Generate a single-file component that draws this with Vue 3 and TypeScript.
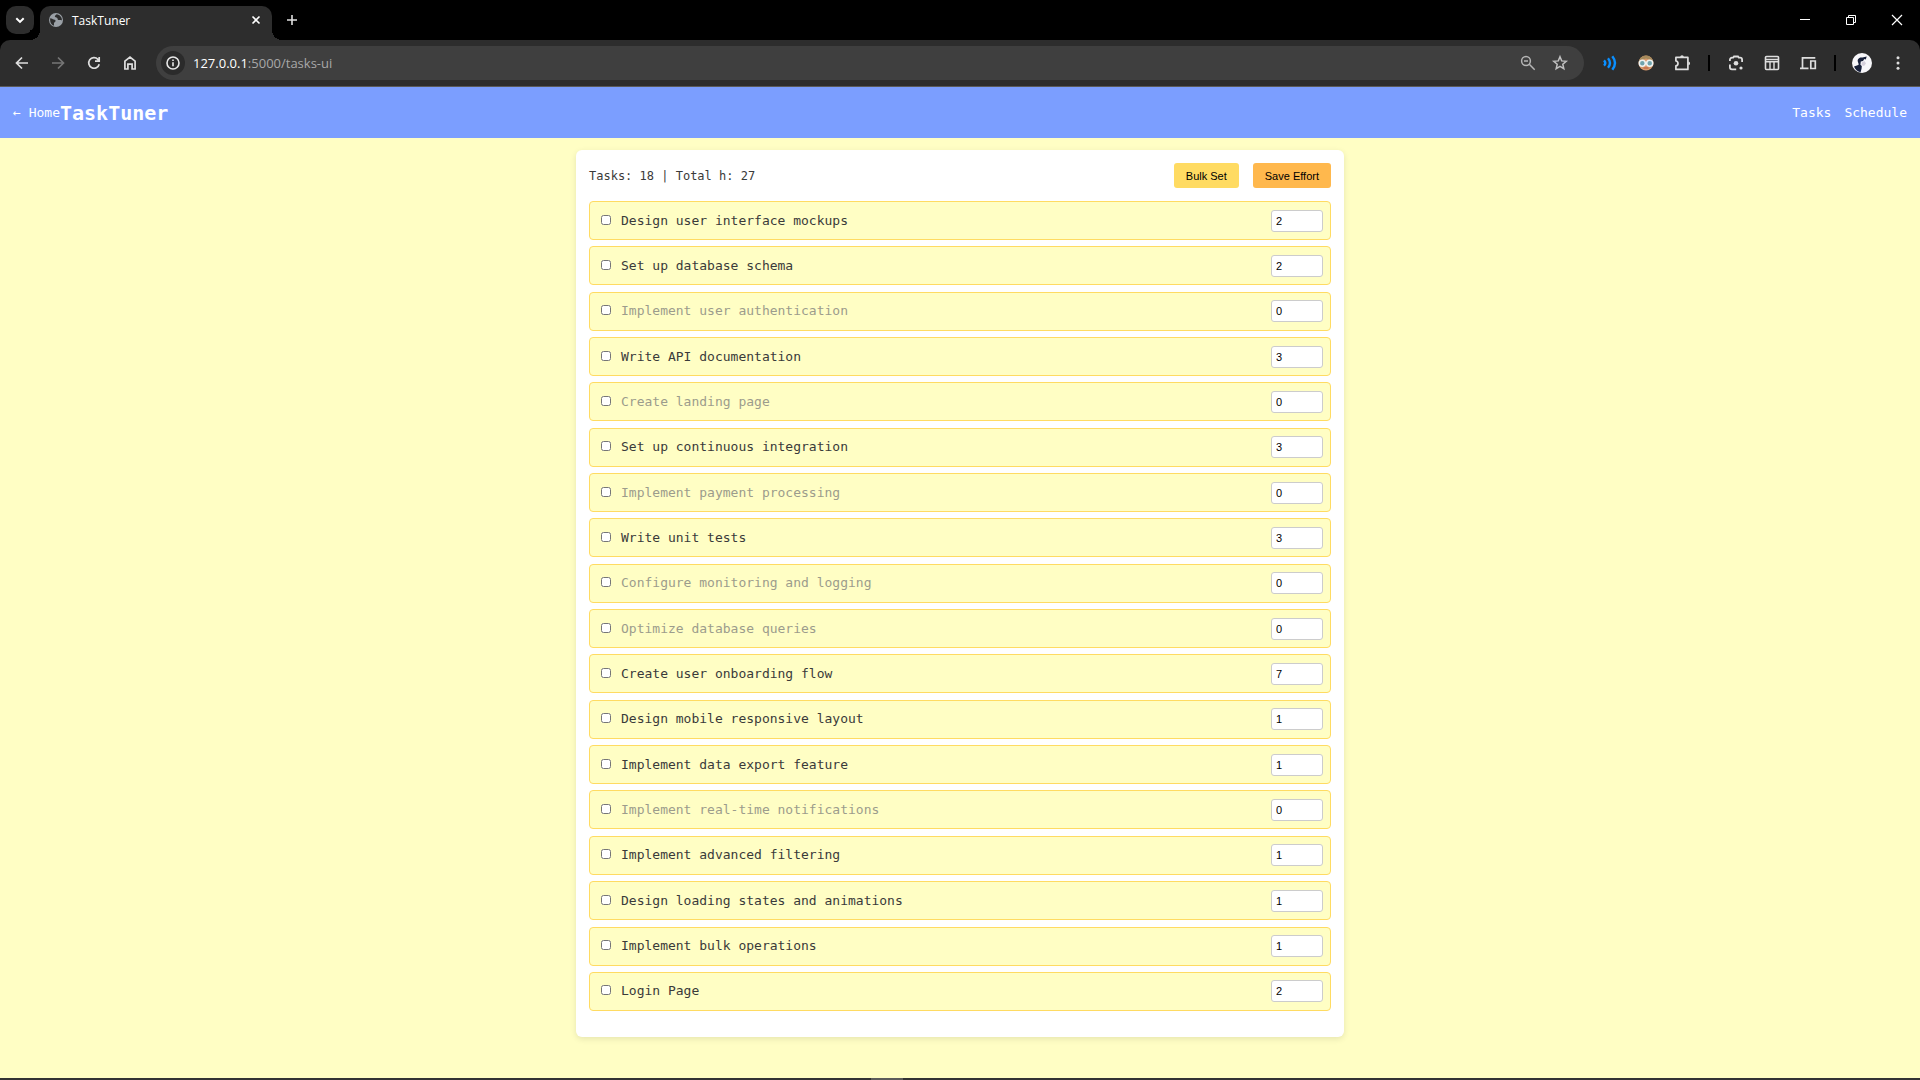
<script setup lang="ts">
import { computed, reactive } from 'vue'

interface Task {
  name: string
  hours: number
  selected: boolean
}

const rows: [string, number][] = [
  ['Design user interface mockups', 2],
  ['Set up database schema', 2],
  ['Implement user authentication', 0],
  ['Write API documentation', 3],
  ['Create landing page', 0],
  ['Set up continuous integration', 3],
  ['Implement payment processing', 0],
  ['Write unit tests', 3],
  ['Configure monitoring and logging', 0],
  ['Optimize database queries', 0],
  ['Create user onboarding flow', 7],
  ['Design mobile responsive layout', 1],
  ['Implement data export feature', 1],
  ['Implement real-time notifications', 0],
  ['Implement advanced filtering', 1],
  ['Design loading states and animations', 1],
  ['Implement bulk operations', 1],
  ['Login Page', 2],
]

const tasks = reactive<Task[]>(rows.map(([name, hours]) => ({ name, hours, selected: false })))
const total = computed(() => tasks.reduce((sum, t) => sum + (Number(t.hours) || 0), 0))
</script>

<template>
  <div class="window">
    <div class="chrome">
      <div class="tabstrip">
        <button class="tab-search" aria-label="Search tabs">
          <svg width="28" height="28" viewBox="0 0 28 28" fill="none" stroke="#fff" stroke-width="2"><path d="M10.300 12.200 14 15.900l3.700-3.700" /></svg>
        </button>
        <div class="tab">
          <svg class="favicon" width="16" height="16" viewBox="0 0 16 16">
            <circle cx="8" cy="8" r="7" fill="#9aa0a6" />
            <path d="M2.200 6.200c1.600.200 2.400 1 3.600 1.200 1.300.200 2 .700 1.700 1.900-.200.900-1.300.900-1.500 1.700-.200.900.300 1.500-.200 2.700C3.500 12.900 1.700 10.300 2.200 6.200zM8.600 2.200c-.500 1-1.700 1-1.800 2-.100 1.100 1.500.900 2.200 1.500.900.700.200 1.700 1.300 2.200 1.300.500 2.300-.300 3.600.700.300-3.200-2-6-5.300-6.400z" fill="#2d2d2d" />
          </svg>
          <span class="tab-title">TaskTuner</span>
          <button class="tab-close" aria-label="Close tab">
            <svg width="16" height="16" viewBox="0 0 16 16" stroke="#fff" stroke-width="1.600"><path d="m4.500 4.500 7 7m0-7-7 7" /></svg>
          </button>
        </div>
        <button class="new-tab" aria-label="New tab">
          <svg width="16" height="16" viewBox="0 0 16 16" stroke="#e0e0e0" stroke-width="1.600"><path d="M8 3v10M3 8h10" /></svg>
        </button>
        <div class="window-controls">
          <button aria-label="Minimize"><svg width="12" height="12" viewBox="0 0 12 12"><path d="M1 5h10v1H1z" fill="#fff" /></svg></button>
          <button aria-label="Restore"><svg width="12" height="12" viewBox="0 0 12 12" fill="none" stroke="#fff"><path d="M1.500 3.500h7v7h-7zM3.500 3.500v-2h7v7h-2" /></svg></button>
          <button aria-label="Close"><svg width="12" height="12" viewBox="0 0 12 12" stroke="#fff" stroke-width="1.200"><path d="m1 1 10 10M11 1 1 11" /></svg></button>
        </div>
      </div>

      <div class="toolbar">
        <button class="tool" aria-label="Back"><svg width="20" height="20" viewBox="0 0 20 20" fill="none" stroke="#dedede" stroke-width="1.700"><path d="M16 10H5M10 4.500 4.500 10l5.500 5.500" /></svg></button>
        <button class="tool" aria-label="Forward"><svg width="20" height="20" viewBox="0 0 20 20" fill="none" stroke="#757575" stroke-width="1.700"><path d="M4 10h11M10 4.500l5.500 5.500-5.500 5.500" /></svg></button>
        <button class="tool" aria-label="Reload"><svg width="20" height="20" viewBox="0 0 20 20" fill="none" stroke="#dedede" stroke-width="1.700"><path d="M15.200 11.200A5.300 5.300 0 1 1 13.900 6.300L15 7.500M15.200 4v4.200H11" /></svg></button>
        <button class="tool" aria-label="Home"><svg width="20" height="20" viewBox="0 0 20 20" fill="none" stroke="#dedede" stroke-width="1.700"><path d="M4.900 8.200 10 4l5.100 4.200V16h-3v-4.800H7.900V16h-3z" /></svg></button>

        <div class="omnibox">
          <button class="site-info" aria-label="Site information"><svg width="16" height="16" viewBox="0 0 16 16" fill="none" stroke="#e8e8e8" stroke-width="1.600"><circle cx="8" cy="8" r="6" /><path d="M8 7.200v4M8 4.500v1.600" /></svg></button>
          <span class="url">127.0.0.1<span class="path">:5000/tasks-ui</span></span>
          <button class="omni-btn" aria-label="Zoom"><svg width="18" height="18" viewBox="0 0 18 18" fill="none" stroke="#b5b5b5" stroke-width="1.500"><circle cx="7" cy="7" r="4.400" /><path d="m10.300 10.300 5.400 5.400M5 7h4" /></svg></button>
          <button class="omni-btn" aria-label="Bookmark"><svg width="18" height="18" viewBox="0 0 18 18" fill="none" stroke="#c0c0c0" stroke-width="1.500"><path d="m9 2.800 1.700 4.100 4.500.400-3.400 2.900 1 4.400L9 12.300l-3.800 2.300 1-4.400-3.400-2.900 4.500-.400z" /></svg></button>
        </div>

        <button class="tool" aria-label="Read aloud"><svg width="18" height="18" viewBox="0 0 18 18" fill="none" stroke="#0a8fff" stroke-width="2.400"><path d="M3 6.300q2.600 2.700 0 5.400M7 4.200q4 4.800 0 9.600M11.300 2.300q5.400 6.700 0 13.400" /></svg></button>
        <button class="tool" aria-label="Extension">
          <svg width="18" height="18" viewBox="0 0 18 18">
            <circle cx="9" cy="9" r="7.500" fill="#d99a6c" />
            <path d="M1.500 9a7.500 7.500 0 0 1 15 0L14 6 9 4.500 4 6z" fill="#a58a5c" />
            <circle cx="5.300" cy="9.300" r="3" fill="#6fa3ad" stroke="#eef2f2" stroke-width="1.500" />
            <circle cx="12.700" cy="9.300" r="3" fill="#6fa3ad" stroke="#eef2f2" stroke-width="1.500" />
            <path d="M6.500 14h5" stroke="#b5543f" />
          </svg>
        </button>
        <button class="tool" aria-label="Extensions"><svg width="20" height="20" viewBox="0 0 20 20" fill="none" stroke="#dedede" stroke-width="1.700"><path d="M3.900 4.400h12v12h-12v-3.600c2.800-.400 2.800-4.400 0-4.800z" stroke-linejoin="round" /><path d="M8.200 4a1.800 1.800 0 0 1 3.600 0zM16.300 8.600a1.800 1.800 0 0 1 0 3.600z" fill="#dedede" stroke="none" /></svg></button>
        <span class="divider"></span>
        <button class="tool" aria-label="Search with Lens"><svg width="18" height="18" viewBox="0 0 18 18" fill="none" stroke="#dedede" stroke-width="1.800"><path d="M2.900 7V5.700a2 2 0 0 1 2-2h1.300l.8-1.200h4l.8 1.200h1.300a2 2 0 0 1 2 2V8M2.900 10.500v2.800a2 2 0 0 0 2 2h4.300" /><circle cx="9" cy="9.200" r="2.300" fill="#dedede" stroke="none" /><circle cx="14" cy="14" r="1.600" fill="#dedede" stroke="none" /></svg></button>
        <button class="tool" aria-label="Reading list"><svg width="18" height="18" viewBox="0 0 18 18" fill="none" stroke="#dedede" stroke-width="1.600"><rect x="2.500" y="2.500" width="13" height="13" rx="1" /><path d="M3 5.500h12M3 7.800h12M7 8v7M11 8v7" stroke-width="1.400" /></svg></button>
        <button class="tool" aria-label="Send to devices"><svg width="18" height="18" viewBox="0 0 18 18" fill="none" stroke="#dedede" stroke-width="1.700"><path d="M1 14.300h8.500M3.500 14V3.900h12.800M11.800 7h4.500v7.500h-4.500z" /></svg></button>
        <span class="divider"></span>
        <button class="tool" aria-label="Profile">
          <svg width="20" height="20" viewBox="0 0 20 20">
            <circle cx="10" cy="10" r="10" fill="#f7f7fa" />
            <path d="M5.800 8.500C5.200 6 7.500 4 10.500 4.600l4.200-1.200-.9 3-1.500-.4-1.300 2-2.200.5-.4 3.200 1.400 1.300-.2 2.500-1 3.700C5.500 18.500 3 16.500 2 13.500l3.600-1.200 1.200-.8z" fill="#17203a" />
            <path d="m12.500 8 1.500 2.500-2 2.500-2.500-1 .3-2.500z" fill="#d5d0dc" />
          </svg>
        </button>
        <button class="tool" aria-label="Menu"><svg width="18" height="18" viewBox="0 0 18 18" fill="#dedede"><circle cx="9" cy="3.700" r="1.500" /><circle cx="9" cy="9" r="1.500" /><circle cx="9" cy="14.300" r="1.500" /></svg></button>
      </div>
    </div>

    <header class="app-header">
      <a class="nav-link" href="#home">← Home</a>
      <h1>TaskTuner</h1>
      <nav>
        <a class="nav-link" href="#tasks">Tasks</a>
        <a class="nav-link" href="#schedule">Schedule</a>
      </nav>
    </header>

    <main>
      <section class="card">
        <div class="card-head">
          <span class="summary">Tasks: {{ tasks.length }} | Total h: {{ total }}</span>
          <div class="actions">
            <button class="action bulk">Bulk Set</button>
            <button class="action save">Save Effort</button>
          </div>
        </div>
        <ul class="tasks">
          <li v-for="(task, i) in tasks" :key="task.name" class="task">
            <input :id="`task-${i}`" v-model="task.selected" type="checkbox" />
            <label :for="`task-${i}`" :class="{ muted: task.hours === 0 }">{{ task.name }}</label>
            <input v-model="task.hours" class="effort" type="number" min="0" :aria-label="`Hours for ${task.name}`" />
          </li>
        </ul>
      </section>
    </main>
    <div class="taskbar-edge"><span></span></div>
  </div>
</template>

<style>
body {
  margin: 0;
  background: #fffec4;
}
</style>

<style scoped>
* {
  box-sizing: border-box;
}
.window {
  display: flex;
  flex-direction: column;
  min-height: 100vh;
  font-family: 'DejaVu Sans Mono', monospace;
  color: #3a3a3a;
}
button {
  padding: 0;
  border: 0;
  background: none;
  font: inherit;
  display: flex;
  align-items: center;
  justify-content: center;
}
.chrome {
  background: #000;
}
.tabstrip {
  display: flex;
  align-items: center;
  height: 40px;
  padding-left: 6px;
  font-family: 'Open Sans', sans-serif;
}
.tab-search {
  width: 28px;
  height: 28px;
  border-radius: 10px;
  background: #2d2d2d;
}
.tab {
  position: relative;
  display: flex;
  align-items: center;
  align-self: flex-end;
  width: 232px;
  height: 34px;
  margin-left: 6px;
  padding: 0 8px 6px;
  border-radius: 10px 10px 0 0;
  background: #2d2d2d;
}
.tab::before,
.tab::after {
  content: '';
  position: absolute;
  bottom: 0;
  width: 10px;
  height: 10px;
}
.tab::before {
  right: 100%;
  background: radial-gradient(circle at 0 0, #000 10px, #2d2d2d 10px);
}
.tab::after {
  left: 100%;
  background: radial-gradient(circle at 100% 0, #000 10px, #2d2d2d 10px);
}
.tab-title {
  flex: 1;
  margin-left: 8px;
  padding-top: 2px;
  font-size: 12px;
  line-height: 16px;
  color: #fff;
}
.new-tab {
  width: 28px;
  height: 28px;
  margin-left: 6px;
}
.window-controls {
  display: flex;
  margin-left: auto;
}
.window-controls button {
  width: 46px;
  height: 40px;
}
.toolbar {
  display: flex;
  align-items: center;
  height: 47px;
  padding: 0 4px;
  background: #2d2d2d;
  border-bottom: 1px solid #5a5a5a;
  border-radius: 10px 10px 0 0;
}
.tool {
  flex: none;
  width: 36px;
  height: 36px;
}
.omnibox {
  flex: 1;
  display: flex;
  align-items: center;
  height: 34px;
  margin: 0 8px;
  padding: 0 8px 0 5px;
  border-radius: 17px;
  background: #3f3f3f;
}
.site-info {
  width: 24px;
  height: 24px;
  border-radius: 50%;
  background: #2b2b2b;
}
.url {
  flex: 1;
  margin-left: 8px;
  font-family: 'Open Sans', sans-serif;
  font-size: 13px;
  line-height: 20px;
  color: #fff;
}
.path {
  color: #a8a8a8;
}
.omni-btn {
  width: 32px;
  height: 32px;
}
.divider {
  flex: none;
  width: 2px;
  height: 16px;
  margin: 0 8px;
  background: #000;
}
.app-header {
  display: flex;
  align-items: center;
  height: 51px;
  padding: 0 13px;
  background: #7b9eff;
  color: #fff;
}
h1 {
  margin: 0;
  font-size: 20px;
  line-height: 24px;
}
nav {
  display: flex;
  gap: 13px;
  margin-left: auto;
}
.nav-link {
  font-size: 13px;
  line-height: 20px;
  color: #fff;
  text-decoration: none;
}
main {
  flex: 1;
  display: flex;
  justify-content: center;
  padding: 12px 12px 41px;
}
.card {
  display: flex;
  flex-direction: column;
  width: 100%;
  max-width: 768px;
  padding: 13px 13px 26px;
  border-radius: 6px;
  background: #fff;
  box-shadow: 0 2px 6px rgba(0, 0, 0, 0.1);
}
.card-head {
  display: flex;
  align-items: center;
  justify-content: space-between;
  margin-bottom: 13px;
}
.summary {
  font-size: 12px;
  line-height: 20px;
}
.actions {
  display: flex;
  gap: 14px;
}
.action {
  height: 25px;
  padding: 0 12px;
  border-radius: 3px;
  font-family: 'Liberation Sans', Arial, sans-serif;
  font-size: 11px;
  color: #000;
}
.bulk {
  background: #ffdb62;
}
.save {
  background: #ffb84d;
}
.tasks {
  flex: 1;
  display: flex;
  flex-direction: column;
  justify-content: space-between;
  gap: 6px;
  margin: 0;
  padding: 0;
  list-style: none;
}
.task {
  display: flex;
  align-items: center;
  height: 39px;
  padding: 0 7px 0 11px;
  border: 1px solid #ffdb62;
  border-radius: 4px;
  background: #fffec4;
}
.task input[type='checkbox'] {
  width: 10px;
  height: 10px;
  margin: 0 0 2px;
}
.task label {
  flex: 1;
  margin-left: 10px;
  font-size: 13px;
  line-height: 20px;
}
.task .muted {
  color: #9c9c8c;
}
.effort {
  width: 52px;
  height: 22px;
  padding: 0 4px;
  border: 1px solid #ccc;
  border-radius: 3px;
  background: #fff;
  font-family: 'Liberation Sans', Arial, sans-serif;
  font-size: 11px;
  color: #000;
}
.taskbar-edge {
  display: flex;
  justify-content: center;
  height: 2px;
  background: #333;
}
.taskbar-edge span {
  width: 32px;
  margin-right: 146px;
  background: #5c5c5a;
}
</style>
